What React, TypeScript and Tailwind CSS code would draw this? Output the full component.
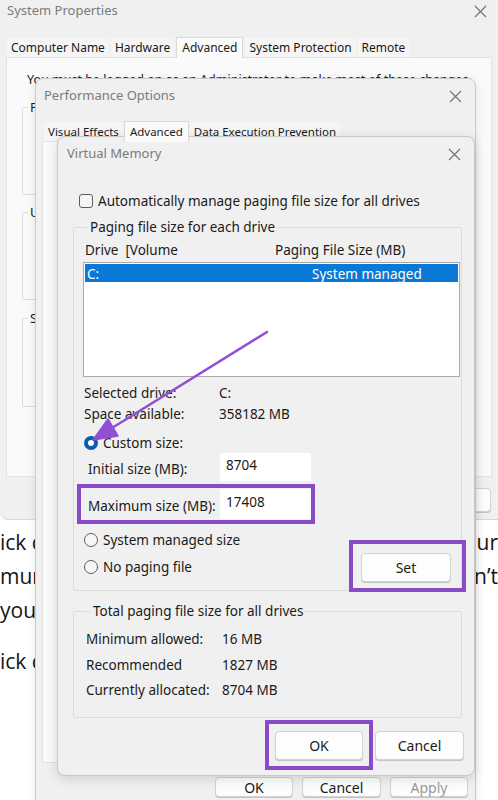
import React from "react";

const ui = "font-['Noto_Sans',sans-serif]";

function CloseIcon() {
  return (
    <svg width="13" height="13" viewBox="0 0 13 13" className="text-[#707070]">
      <path d="M1 1L12 12M12 1L1 12" stroke="currentColor" strokeWidth="1.1" />
    </svg>
  );
}

function Radio({ checked }: { checked?: boolean }) {
  if (checked) {
    return (
      <span className="flex h-[14px] w-[14px] shrink-0 items-center justify-center rounded-full bg-[#0b5cad]">
        <span className="h-[6px] w-[6px] rounded-full bg-white" />
      </span>
    );
  }
  return <span className="h-[14px] w-[14px] shrink-0 rounded-full border border-[#5c5c5c] bg-[#f6f6f6]" />;
}

function Btn({ children, className = "" }: { children: React.ReactNode; className?: string }) {
  return (
    <button
      className={`flex items-center justify-center rounded-[4px] border border-[#d2d2d2] bg-[#fdfdfd] text-[14px] text-[#1a1a1a] shadow-[0_1px_0_#c4c4c4] ${className}`}
    >
      {children}
    </button>
  );
}

function Tab({ label, active, size }: { label: string; active?: boolean; size: string }) {
  return active ? (
    <div className={`relative z-10 -mb-px flex h-[21px] items-start border border-b-0 border-[#dadada] bg-[#fafafa] px-[5px] pt-[1px] text-[#1a1a1a] ${size}`}>
      {label}
    </div>
  ) : (
    <div className={`mt-[2px] flex h-[19px] items-center bg-[#f5f5f5] px-[4px] text-[#1a1a1a] ${size}`}>{label}</div>
  );
}

function GroupBox({ title, className = "" }: { title: string; className?: string }) {
  return (
    <fieldset className={`rounded-[2px] border border-[#dcdcdc] ${className}`}>
      <legend className="ml-[5px] px-[2px] text-[13px] leading-[20px] text-[#1a1a1a]">{title}</legend>
    </fieldset>
  );
}

function SystemProperties() {
  return (
    <div className="h-[520px] overflow-hidden rounded-bl-[8px] border-b border-[#d8d8d8] bg-[#f0f0f0]">
      <div className="flex h-[22px] items-center justify-between pl-[7px] pr-[11px]">
        <span className="text-[13px] text-[#7b7b7b]">System Properties</span>
        <CloseIcon />
      </div>
      <div className="mt-[14px] flex h-[21px] items-end gap-[2px] pl-[7px]">
        <Tab size="text-[12px]" label="Computer Name" />
        <Tab size="text-[12px]" label="Hardware" />
        <Tab size="text-[12px]" label="Advanced" active />
        <Tab size="text-[12px]" label="System Protection" />
        <Tab size="text-[12px]" label="Remote" />
      </div>
      <div className="mx-[6px] flex h-[420px] flex-col border border-[#e2e2e2] bg-[#fafafa] px-[15px]">
        <p className="mt-[12px] whitespace-nowrap pl-[5px] text-[12.5px] leading-[20px] text-[#1a1a1a]">
          You must be logged on as an Administrator to make most of these changes.
        </p>
        <GroupBox title="Performance" className="mt-[7px] h-[98px]" />
        <GroupBox title="User Profiles" className="mt-[7px] h-[98px]" />
        <GroupBox title="Startup and Recovery" className="mt-[8px] h-[99px]" />
      </div>
      <div className="mt-[11px] flex justify-end gap-[8px] pr-[7px]">
        <Btn className="h-[24px] w-[76px]">OK</Btn>
        <Btn className="h-[24px] w-[76px]">Cancel</Btn>
        <Btn className="h-[24px] w-[78px] text-[#9a9a9a]">Apply</Btn>
      </div>
    </div>
  );
}

function ArticleText() {
  const lines: [string, string][] = [
    ["ick c", "ur"],
    ["mur", "n’t"],
    ["you", ""],
  ];
  return (
    <div className="pt-[5px] font-['Open_Sans',sans-serif] text-[21px] leading-[34px] text-[#151515]">
      {lines.map(([l, r], i) => (
        <div key={i} className="flex justify-between whitespace-nowrap">
          <span>{l}</span>
          <span>{r}</span>
        </div>
      ))}
      <div className="mt-[17px] flex justify-between whitespace-nowrap">
        <span>ick c</span>
        <span />
      </div>
    </div>
  );
}

function PerformanceOptions() {
  return (
    <div className="absolute left-[35px] top-[78px] flex h-[730px] w-[441px] flex-col rounded-t-[8px] border border-[#cbcbcb] bg-[#f0f0f0] shadow-[0_2px_10px_rgba(0,0,0,0.10)]">
      <div className="flex h-[34px] items-center justify-between pl-[8px] pr-[13px]">
        <span className="text-[13px] text-[#7b7b7b]">Performance Options</span>
        <CloseIcon />
      </div>
      <div className="mt-[9px] flex h-[19px] items-end gap-[1px] pl-[8px]">
        <Tab size="text-[11.5px]" label="Visual Effects" />
        <Tab size="text-[11.5px]" label="Advanced" active />
        <Tab size="text-[11.5px]" label="Data Execution Prevention" />
      </div>
      <div className="mx-[6px] h-[622px] border border-[#e2e2e2] bg-[#fafafa]" />
      <div className="mt-[14px] flex justify-end gap-[9px] pr-[7px]">
        <Btn className="h-[20px] w-[78px]">OK</Btn>
        <Btn className="h-[20px] w-[79px]">Cancel</Btn>
        <Btn className="h-[20px] w-[78px] text-[#9a9a9a]">Apply</Btn>
      </div>
    </div>
  );
}

function VirtualMemory() {
  return (
    <div className="absolute left-[57px] top-[136px] flex h-[640px] w-[418px] flex-col rounded-[8px] border border-[#c8c8c8] bg-[#f0f0f0] pl-[15px] pr-[12px] text-[13.5px] text-[#1a1a1a] shadow-[0_3px_12px_rgba(0,0,0,0.14)]">
      <div className="-ml-[15px] -mr-[12px] flex h-[34px] items-center justify-between pl-[9px] pr-[13px]">
        <span className="text-[13px] text-[#7b7b7b]">Virtual Memory</span>
        <CloseIcon />
      </div>

      <label className="mt-[20px] flex h-[20px] items-center gap-[5px] pl-[6px]">
        <span className="h-[14px] w-[14px] rounded-[3px] border border-[#5c5c5c] bg-[#f6f6f6]" />
        Automatically manage paging file size for all drives
      </label>

      <fieldset className="mt-[6px] rounded-[2px] border border-[#dcdcdc] pb-[8px] pl-[9px] pr-[1px]">
        <legend className="ml-[5px] px-[2px] leading-[20px]">Paging file size for each drive</legend>
        <div className="mt-[3px] grid h-[20px] grid-cols-[190px_1fr] items-center pl-[2px]">
          <span className="whitespace-pre">Drive  [Volume</span>
          <span>Paging File Size (MB)</span>
        </div>
        <div className="mt-[2px] h-[115px] border border-[#a9a9a9] bg-white p-[1px]">
          <div className="grid h-[18px] grid-cols-[225px_1fr] items-center bg-[#0a78d6] pl-[2px] text-white">
            <span>C:</span>
            <span>System managed</span>
          </div>
        </div>

        <div className="mt-[6px] grid grid-cols-[135px_1fr] pl-[1px] leading-[21px]">
          <span>Selected drive:</span>
          <span>C:</span>
          <span>Space available:</span>
          <span>358182 MB</span>
        </div>

        <div className="mt-[8px] flex h-[20px] items-center gap-[5px] pl-[1px]">
          <Radio checked />
          Custom size:
        </div>
        <div className="grid h-[28px] grid-cols-[132px_91px] items-center pl-[5px]">
          <span className="pt-[4px]">Initial size (MB):</span>
          <div className="h-[28px] bg-white px-[6px] pt-[2px]">8704</div>
        </div>
        <div className="mt-[8px] grid h-[30px] grid-cols-[132px_91px] items-center pl-[5px]">
          <span className="pt-[4px]">Maximum size (MB):</span>
          <div className="h-[30px] bg-white px-[6px] pt-[3px]">17408</div>
        </div>

        <div className="mt-[11px] flex items-end justify-between">
          <div className="flex flex-col gap-[7px] pb-[5px] pl-[1px]">
            <div className="flex h-[20px] items-center gap-[5px]">
              <Radio />
              System managed size
            </div>
            <div className="flex h-[20px] items-center gap-[5px]">
              <Radio />
              No paging file
            </div>
          </div>
          <Btn className="mr-[9px] h-[29px] w-[90px]">Set</Btn>
        </div>
      </fieldset>

      <fieldset className="mt-[10px] rounded-[2px] border border-[#dcdcdc] pb-[13px] pl-[12px]">
        <legend className="ml-[5px] px-[2px] leading-[20px]">Total paging file size for all drives</legend>
        <div className="mt-[6px] grid grid-cols-[136px_1fr] leading-[25.5px]">
          <span>Minimum allowed:</span>
          <span>16 MB</span>
          <span>Recommended</span>
          <span>1827 MB</span>
          <span>Currently allocated:</span>
          <span>8704 MB</span>
        </div>
      </fieldset>

      <div className="-mr-[2px] mt-[13px] flex justify-end gap-[12px]">
        <Btn className="h-[29px] w-[88px]">OK</Btn>
        <Btn className="h-[29px] w-[89px]">Cancel</Btn>
      </div>
    </div>
  );
}

function Annotations() {
  return (
    <>
      <div className="pointer-events-none absolute left-[77px] top-[484px] h-[40px] w-[238px] border-[4px] border-[#8a4bc8]" />
      <div className="pointer-events-none absolute left-[349px] top-[540px] h-[52px] w-[117px] border-[4px] border-[#8a4bc8]" />
      <div className="pointer-events-none absolute left-[265px] top-[720px] h-[50px] w-[108px] border-[4px] border-[#8a4bc8]" />
      <svg className="pointer-events-none absolute left-0 top-0" width="498" height="800" viewBox="0 0 498 800">
        <path d="M267 332 L112 428" stroke="#9150d4" strokeWidth="2.6" strokeLinecap="round" />
        <path d="M93 440 L108 419 L118 436 Z" fill="#9150d4" stroke="#9150d4" strokeWidth="1.5" strokeLinejoin="round" />
      </svg>
    </>
  );
}

export default function App() {
  return (
    <div className={`relative h-[800px] w-[498px] overflow-hidden bg-white ${ui}`}>
      <SystemProperties />
      <ArticleText />
      <PerformanceOptions />
      <VirtualMemory />
      <Annotations />
    </div>
  );
}
